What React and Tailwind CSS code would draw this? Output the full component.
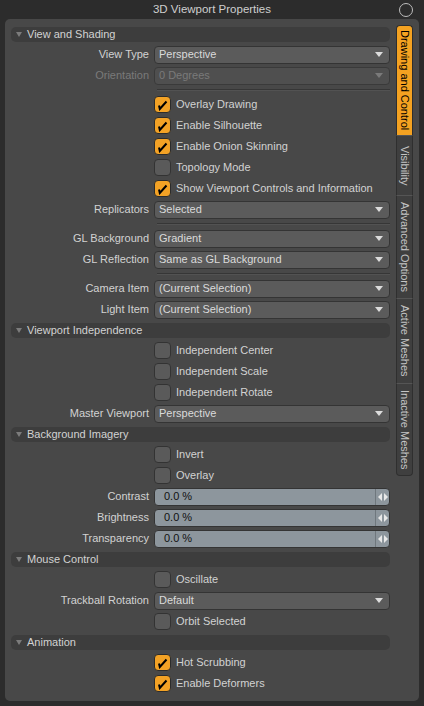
import React from "react";

const font = { fontFamily: '"Liberation Sans", Arial, sans-serif' };

function Check({ on }) {
  return (
    <div
      className={
        "w-[17px] h-[17px] rounded-[4px] border flex items-center justify-center shrink-0 " +
        (on ? "bg-[#f3a225] border-[#2c2c2c]" : "bg-[#5a5a5a] border-[#333333]")
      }
    >
      {on && (
        <svg width="13" height="13" viewBox="0 0 13 13">
          <path d="M3 7.5 L3.8 11 L10.5 3.5" stroke="#000" strokeWidth="2" fill="none" strokeLinejoin="miter" />
        </svg>
      )}
    </div>
  );
}

function Row({ label, children, disabled }) {
  return (
    <div className="h-[21px] flex items-center">
      <div
        className={
          "w-[138px] text-right pr-[0px] whitespace-nowrap " +
          (disabled ? "text-[#7a7a7a]" : "text-[#d2d2d2]")
        }
      >
        {label}
      </div>
      <div className="ml-[5px] flex-1 flex items-center">{children}</div>
    </div>
  );
}

function Dropdown({ value, disabled }) {
  return (
    <div
      className={
        "h-[18px] w-full rounded-[4px] border flex items-center pl-[4px] pr-[6px] " +
        (disabled
          ? "bg-[#4f4f4f] border-[#3a3a3a] text-[#7a7a7a]"
          : "bg-[#5b5b5b] border-[#343434] text-[#dadada]")
      }
    >
      <span className="flex-1 whitespace-nowrap">{value}</span>
      <svg width="8" height="5" viewBox="0 0 8 5">
        <path d="M0 0 L8 0 L4 5 Z" fill={disabled ? "#7a7a7a" : "#dcdcdc"} />
      </svg>
    </div>
  );
}

function CheckRow({ label, on }) {
  return (
    <div className="h-[21px] flex items-center">
      <div className="w-[138px]" />
      <div className="ml-[5px] flex items-center">
        <Check on={on} />
        <span className="ml-[5px] text-[#d2d2d2] whitespace-nowrap">{label}</span>
      </div>
    </div>
  );
}

function Slider({ value }) {
  return (
    <div className="h-[18px] w-full rounded-[4px] border border-[#343434] bg-[#8d969d] flex items-center overflow-hidden">
      <span className="flex-1 pl-[9px] text-[#111]">{value}</span>
      <div className="h-full w-[14px] border-l border-[#6f777d] flex items-center justify-center">
        <svg width="10" height="8" viewBox="0 0 10 8">
          <path d="M4 0 L4 8 L0 4 Z" fill="#e8e8e8" />
          <path d="M6 0 L6 8 L10 4 Z" fill="#e8e8e8" />
        </svg>
      </div>
    </div>
  );
}

function Header({ title }) {
  return (
    <div className="h-[20px] pt-[3px]">
      <div className="h-[15px] rounded-[5px] bg-[#3d3d3d] flex items-center pl-[5px] text-[#d2d2d2]">
        <svg width="6" height="5" viewBox="0 0 6 5" className="mr-[5px]">
          <path d="M0 0 L6 0 L3 5 Z" fill="#7c7c7c" />
        </svg>
        <span className="whitespace-nowrap">{title}</span>
      </div>
    </div>
  );
}

function Sep() {
  return (
    <div className="h-[8px] flex items-center pl-[146px]">
      <div className="w-full h-[2px] border-t border-[#363636] border-b border-b-[#525252]" />
    </div>
  );
}

function Tab({ label, h, active, first, last }) {
  return (
    <div
      className={
        "w-[17px] flex items-center justify-center border-x " +
        (active
          ? "bg-[#f4a221] text-black border-[#2e2e2e] rounded-t-[4px] border-t"
          : "bg-[#3f3f3f] text-[#c4c4c4] border-[#2f2f2f] border-t border-t-[#555555]") +
        (last ? " rounded-b-[4px] border-b border-b-[#2f2f2f]" : "")
      }
      style={{ height: h }}
    >
      <span className="[writing-mode:vertical-rl] whitespace-nowrap leading-none">{label}</span>
    </div>
  );
}

export default function App() {
  return (
    <div className="w-[424px] h-[706px] bg-[#2c2c2c] flex flex-col text-[11px]" style={font}>
      <div className="h-[19px] relative flex items-center justify-center text-[#cfcfcf] text-[11.5px]">
        <span>3D Viewport Properties</span>
        <div className="absolute right-[11px] top-[3px] w-[14px] h-[14px] rounded-full border-[1.5px] border-[#bdbdbd]" />
      </div>
      <div className="mx-[5px] h-[682px] rounded-[5px] bg-[#484848] flex pt-[5px] pl-[6px] pr-[6px]">
        <div className="w-[379px] flex flex-col">
          <Header title="View and Shading" />
          <Row label="View Type"><Dropdown value="Perspective" /></Row>
          <Row label="Orientation" disabled><Dropdown value="0 Degrees" disabled /></Row>
          <Sep />
          <CheckRow label="Overlay Drawing" on />
          <CheckRow label="Enable Silhouette" on />
          <CheckRow label="Enable Onion Skinning" on />
          <CheckRow label="Topology Mode" />
          <CheckRow label="Show Viewport Controls and Information" on />
          <Row label="Replicators"><Dropdown value="Selected" /></Row>
          <Sep />
          <Row label="GL Background"><Dropdown value="Gradient" /></Row>
          <Row label="GL Reflection"><Dropdown value="Same as GL Background" /></Row>
          <Sep />
          <Row label="Camera Item"><Dropdown value="(Current Selection)" /></Row>
          <Row label="Light Item"><Dropdown value="(Current Selection)" /></Row>
          <Header title="Viewport Independence" />
          <CheckRow label="Independent Center" />
          <CheckRow label="Independent Scale" />
          <CheckRow label="Independent Rotate" />
          <Row label="Master Viewport"><Dropdown value="Perspective" /></Row>
          <Header title="Background Imagery" />
          <CheckRow label="Invert" />
          <CheckRow label="Overlay" />
          <Row label="Contrast"><Slider value="0.0 %" /></Row>
          <Row label="Brightness"><Slider value="0.0 %" /></Row>
          <Row label="Transparency"><Slider value="0.0 %" /></Row>
          <Header title="Mouse Control" />
          <CheckRow label="Oscillate" />
          <Row label="Trackball Rotation"><Dropdown value="Default" /></Row>
          <CheckRow label="Orbit Selected" />
          <Header title="Animation" />
          <CheckRow label="Hot Scrubbing" on />
          <CheckRow label="Enable Deformers" on />
        </div>
        <div className="ml-[6px] mt-[1px] flex flex-col">
          <Tab label="Drawing and Control" h={110} active />
          <Tab label="Visibility" h={60} />
          <Tab label="Advanced Options" h={103} />
          <Tab label="Active Meshes" h={85} />
          <Tab label="Inactive Meshes" h={93} last />
        </div>
      </div>
    </div>
  );
}
